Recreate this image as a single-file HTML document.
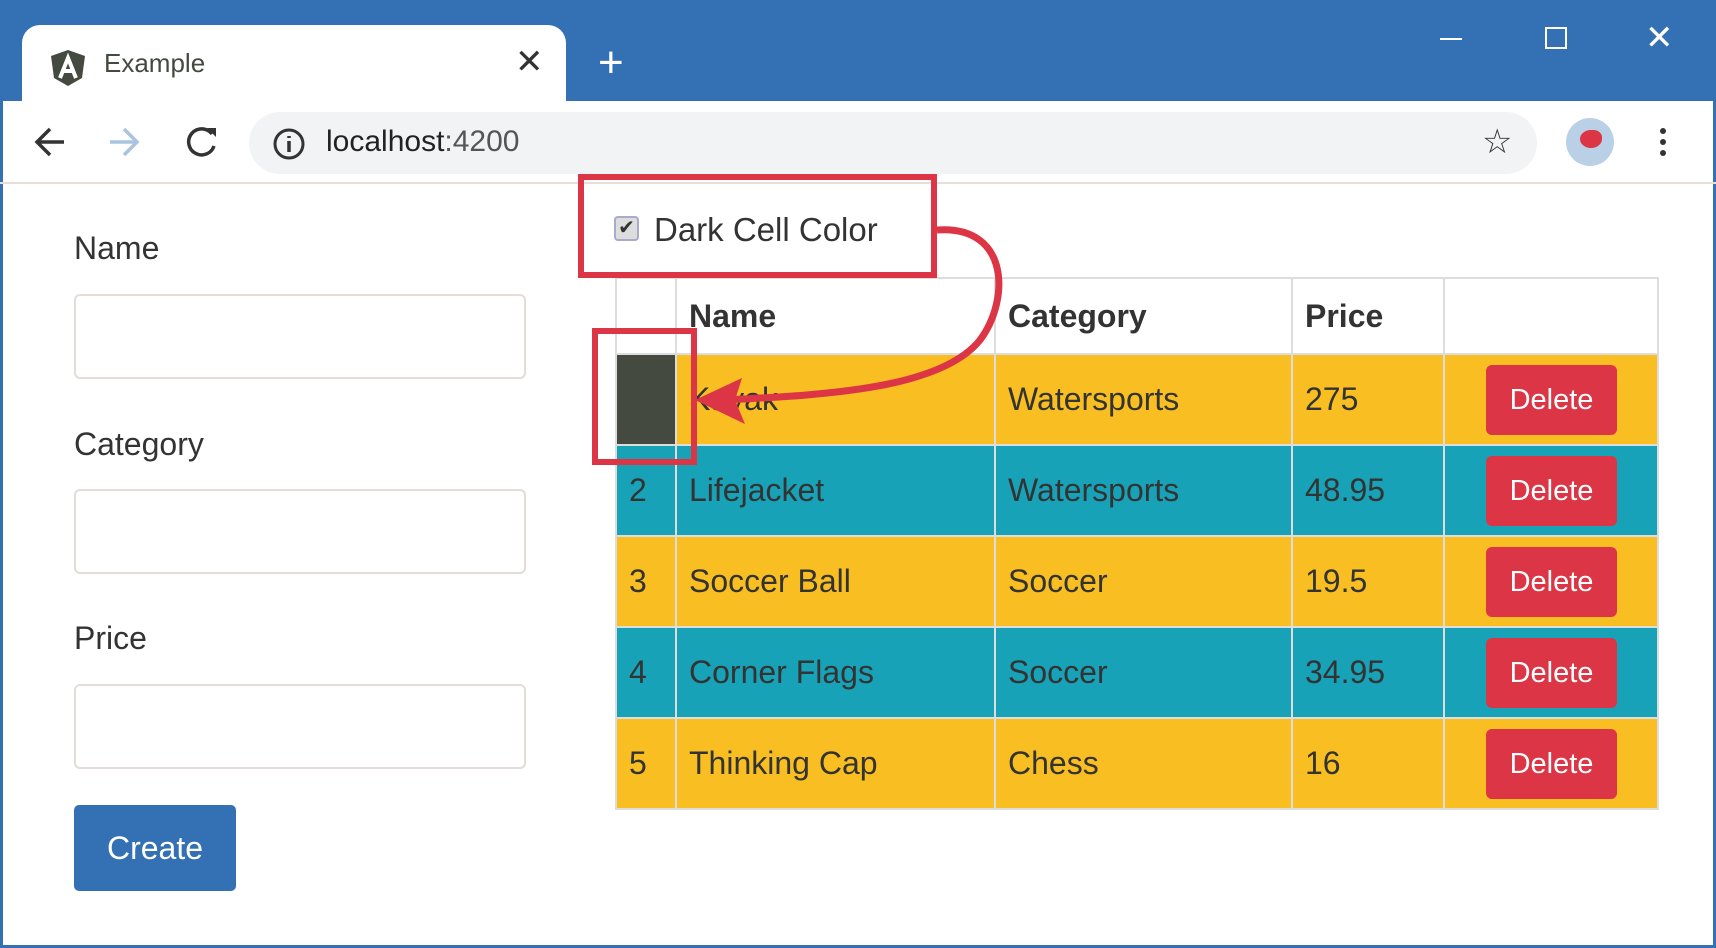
<!DOCTYPE html>
<html><head><meta charset="utf-8"><style>
*{box-sizing:border-box;margin:0;padding:0}
body{width:1716px;height:948px;overflow:hidden;background:#fff;font-family:"Liberation Sans",sans-serif;color:#212529;position:relative}
.abs{position:absolute}
.lbl{position:absolute;left:74px;font-size:32px;color:#333}
.inp{position:absolute;left:74px;width:452px;height:85px;border:2px solid #e3dcd8;border-radius:6px}
table{position:absolute;left:615px;top:277px;border-collapse:collapse;font-size:32px;color:#333}
td,th{border:2px solid #ddd;padding:0 12px;text-align:left;vertical-align:middle}
th{height:76px;font-weight:bold}
td{height:91px}
.y td{background:#f8be22}.t td{background:#18a2b8}
.del{display:inline-block;background:#dc3545;color:#fff;border-radius:6px;width:131px;height:70px;line-height:70px;text-align:center;font-size:29px;margin-left:41px}
</style></head><body>
<div class="abs" style="left:0;top:0;width:1716px;height:101px;background:#3371b4"></div>
<div class="abs" style="left:0;top:0;width:1716px;height:948px;border:3px solid #3371b4;border-top:none"></div>
<div class="abs" style="left:22px;top:25px;width:544px;height:80px;background:#fff;border-radius:18px 18px 0 0"></div>
<svg class="abs" style="left:48px;top:48px" width="40" height="40" viewBox="0 0 40 40"><path d="M20 2 L37 8 L34 30 L20 38 L6 30 L3 8Z" fill="#454a40"/><path d="M12 30 L20 10 L28 30 M15 23 H25" stroke="#fff" stroke-width="4" fill="none"/></svg>
<div class="abs" style="left:104px;top:48px;font-size:26px;color:#454a40">Example</div>
<div class="abs" style="left:515px;top:42px;font-size:34px;color:#333">✕</div>
<div class="abs" style="left:598px;top:38px;font-size:44px;color:#fff">+</div>
<div class="abs" style="left:1440px;top:38px;width:22px;height:2px;background:#fff"></div>
<div class="abs" style="left:1545px;top:27px;width:22px;height:22px;border:2px solid #fff"></div>
<div class="abs" style="left:1645px;top:18px;font-size:34px;color:#fff">✕</div>
<div class="abs" style="left:0;top:101px;width:1716px;height:83px;border-bottom:2px solid #e6ded8"></div>
<div class="abs" style="left:249px;top:112px;width:1288px;height:62px;background:#f1f3f4;border-radius:31px"></div>
<svg class="abs" style="left:30px;top:122px" width="200" height="40" viewBox="0 0 200 40"><path d="M34 20H8M20 7L7 20L20 33" stroke="#333" stroke-width="3.5" fill="none"/><path d="M80 20H106M94 7L107 20L94 33" stroke="#a9c4e0" stroke-width="3.5" fill="none"/><path d="M182 12 A13 13 0 1 0 184 24" stroke="#333" stroke-width="3.5" fill="none"/><path d="M177 6 L186 6 L186 15Z" fill="#333"/></svg>
<svg class="abs" style="left:272px;top:127px" width="34" height="34" viewBox="0 0 34 34"><circle cx="17" cy="17" r="14" stroke="#333" stroke-width="3" fill="none"/><path d="M17 14V25M17 9V11" stroke="#333" stroke-width="3.5"/></svg>
<div class="abs" style="left:326px;top:125px;font-size:30px;color:#222">localhost<span style="color:#555">:4200</span></div>
<div class="abs" style="left:1482px;top:122px;font-size:34px;color:#333">☆</div>
<div class="abs" style="left:1566px;top:118px;width:48px;height:48px;border-radius:50%;background:#b9d0e6"></div>
<div class="abs" style="left:1580px;top:130px;width:22px;height:18px;border-radius:50% 40% 50% 50%;background:#dc3545"></div>
<div class="abs" style="left:1660px;top:128px;width:6px;height:6px;border-radius:50%;background:#333;box-shadow:0 11px #333,0 22px #333"></div>

<div class="lbl" style="top:230px">Name</div><div class="inp" style="top:294px"></div>
<div class="lbl" style="top:426px">Category</div><div class="inp" style="top:489px"></div>
<div class="lbl" style="top:620px">Price</div><div class="inp" style="top:684px"></div>
<div class="abs" style="left:74px;top:805px;width:162px;height:86px;background:#3371b4;border-radius:5px;color:#fff;font-size:32px;line-height:86px;text-align:center">Create</div>

<div class="abs" style="left:614px;top:216px;width:25px;height:25px;border:2px solid #aac;border-radius:4px;background:#ddd;font-size:20px;line-height:21px;text-align:center;color:#333">✔</div>
<div class="abs" style="left:654px;top:211px;font-size:33px;color:#333">Dark Cell Color</div>

<table>
<tr><th style="width:60px"></th><th style="width:319px">Name</th><th style="width:297px">Category</th><th style="width:152px">Price</th><th style="width:214px"></th></tr>
<tr class="y"><td style="background:#454a40"></td><td>Kayak</td><td>Watersports</td><td>275</td><td style="padding:0"><span class="del">Delete</span></td></tr>
<tr class="t"><td>2</td><td>Lifejacket</td><td>Watersports</td><td>48.95</td><td style="padding:0"><span class="del">Delete</span></td></tr>
<tr class="y"><td>3</td><td>Soccer Ball</td><td>Soccer</td><td>19.5</td><td style="padding:0"><span class="del">Delete</span></td></tr>
<tr class="t"><td>4</td><td>Corner Flags</td><td>Soccer</td><td>34.95</td><td style="padding:0"><span class="del">Delete</span></td></tr>
<tr class="y"><td>5</td><td>Thinking Cap</td><td>Chess</td><td>16</td><td style="padding:0"><span class="del">Delete</span></td></tr>
</table>

<svg class="abs" style="left:0;top:0" width="1716" height="948">
<rect x="581" y="177" width="353" height="98" fill="none" stroke="#dc3545" stroke-width="6"/>
<rect x="595" y="331" width="99" height="131" fill="none" stroke="#dc3545" stroke-width="6"/>
<path d="M937 230 C1010 225 1010 300 980 340 C940 390 820 395 725 400" fill="none" stroke="#dc3545" stroke-width="7"/>
<path d="M695 400 L742 378 L735 400 L745 424Z" fill="#dc3545"/>
</svg>
</body></html>
